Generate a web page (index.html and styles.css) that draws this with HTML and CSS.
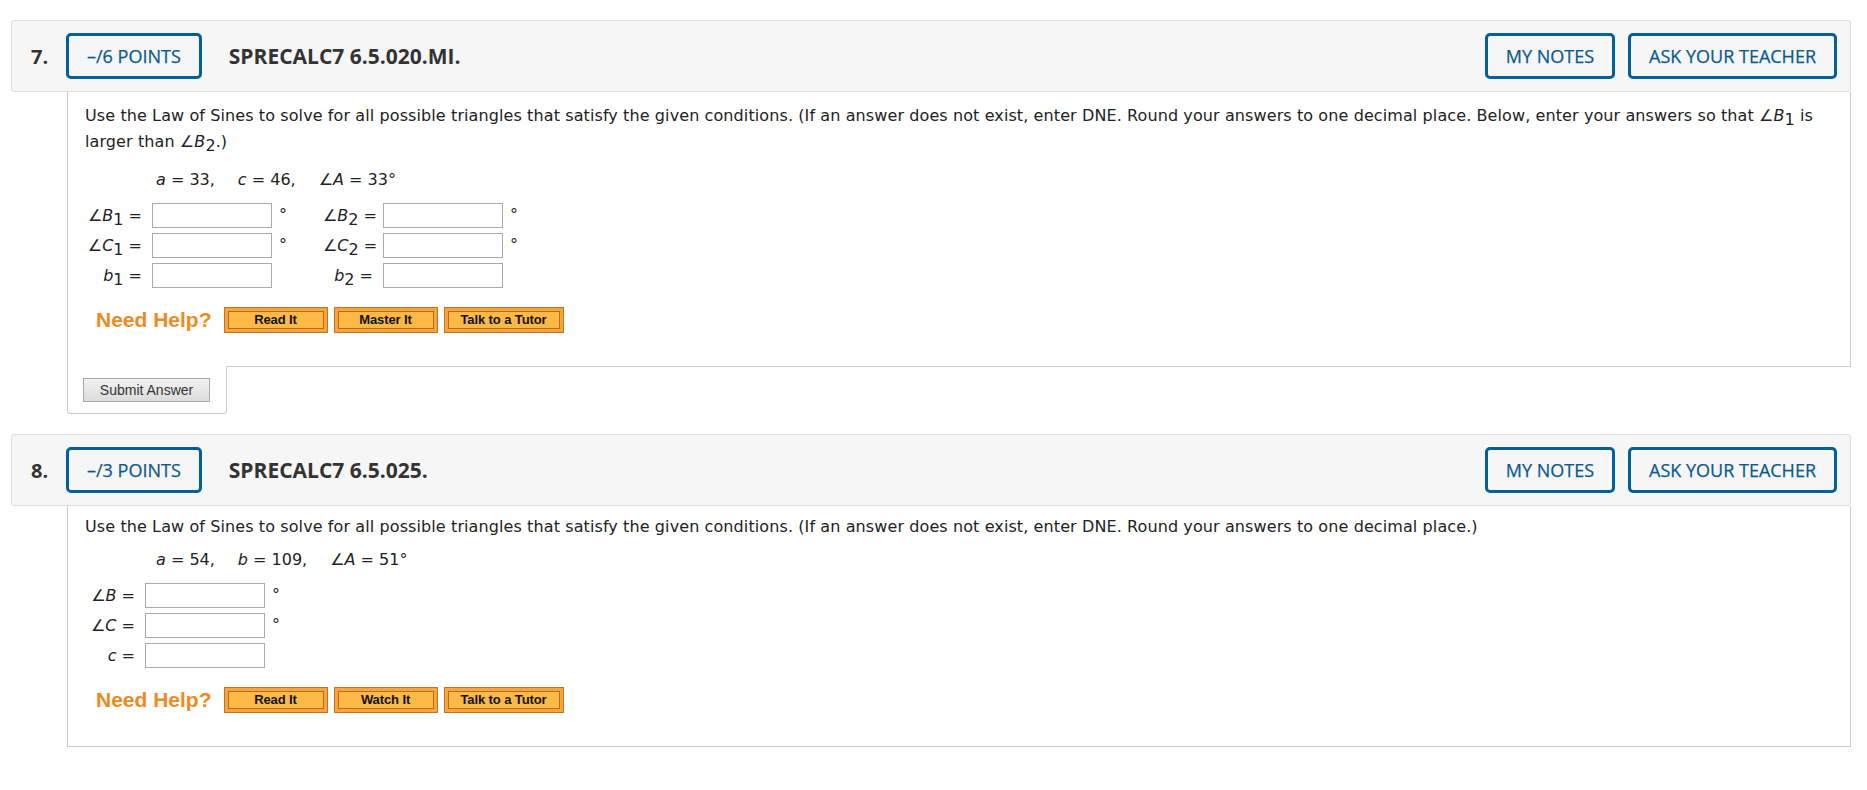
FILE: index.html
```html
<!DOCTYPE html>
<html>
<head>
<meta charset="utf-8">
<link rel="stylesheet" href="styles.css">
</head>
<body>
<div class="page">
  <section class="question">
    <header class="qhead">
      <span class="qnum">7.</span>
      <span class="hbtn">–/6 POINTS</span>
      <span class="qtitle">SPRECALC7 6.5.020.MI.</span>
      <span class="spacer"></span>
      <span class="hbtn">MY NOTES</span>
      <span class="hbtn teacher">ASK YOUR TEACHER</span>
    </header>
    <div class="qbody">
      <p class="prompt">Use the Law of Sines to solve for all possible triangles that satisfy the given conditions. (If an answer does not exist, enter DNE. Round your answers to one decimal place. Below, enter your answers so that <span class="m">∠<i>B</i><sub>1</sub></span> is larger than <span class="m">∠<i>B</i><sub>2</sub></span>.)</p>
      <p class="given"><span class="gi"><i>a</i> = 33,</span><span class="gi"><i>c</i> = 46,</span><span class="gi">∠<i>A</i> = 33°</span></p>
      <div class="answers two">
        <span class="lbl">∠<i>B</i><sub>1</sub> =</span><span class="box"></span><span class="deg">°</span>
        <span class="lbl">∠<i>B</i><sub>2</sub> =</span><span class="box"></span><span class="deg">°</span>
        <span class="lbl">∠<i>C</i><sub>1</sub> =</span><span class="box"></span><span class="deg">°</span>
        <span class="lbl">∠<i>C</i><sub>2</sub> =</span><span class="box"></span><span class="deg">°</span>
        <span class="lbl"><i>b</i><sub>1</sub> =</span><span class="box"></span><span class="deg"></span>
        <span class="lbl"><i>b</i><sub>2</sub> =</span><span class="box"></span><span class="deg"></span>
      </div>
      <div class="help">
        <span class="needhelp">Need Help?</span>
        <span class="hb"><span class="hbi">Read It</span></span>
        <span class="hb"><span class="hbi">Master It</span></span>
        <span class="hb wide"><span class="hbi">Talk to a Tutor</span></span>
      </div>
    </div>
    <div class="submit-tab"><span class="submit">Submit Answer</span></div>
  </section>

  <section class="question">
    <header class="qhead">
      <span class="qnum">8.</span>
      <span class="hbtn">–/3 POINTS</span>
      <span class="qtitle">SPRECALC7 6.5.025.</span>
      <span class="spacer"></span>
      <span class="hbtn">MY NOTES</span>
      <span class="hbtn teacher">ASK YOUR TEACHER</span>
    </header>
    <div class="qbody compact">
      <p class="prompt">Use the Law of Sines to solve for all possible triangles that satisfy the given conditions. (If an answer does not exist, enter DNE. Round your answers to one decimal place.)</p>
      <p class="given"><span class="gi"><i>a</i> = 54,</span><span class="gi"><i>b</i> = 109,</span><span class="gi">∠<i>A</i> = 51°</span></p>
      <div class="answers one">
        <span class="lbl">∠<i>B</i> =</span><span class="box"></span><span class="deg">°</span>
        <span class="lbl">∠<i>C</i> =</span><span class="box"></span><span class="deg">°</span>
        <span class="lbl"><i>c</i> =</span><span class="box"></span><span class="deg"></span>
      </div>
      <div class="help">
        <span class="needhelp">Need Help?</span>
        <span class="hb"><span class="hbi">Read It</span></span>
        <span class="hb"><span class="hbi">Watch It</span></span>
        <span class="hb wide"><span class="hbi">Talk to a Tutor</span></span>
      </div>
    </div>
  </section>
</div>
</body>
</html>
```

FILE: styles.css
```css
html, body {
  margin: 0;
  padding: 0;
  background: #ffffff;
}

.page {
  padding: 20px 0 0 11px;
  width: 1840px;
  font-family: "DejaVu Sans", Verdana, sans-serif;
  color: #222222;
}

.question {
  margin-bottom: 20px;
}

.qhead {
  display: flex;
  align-items: center;
  height: 70px;
  border: 1px solid #dddddd;
  border-radius: 3px;
  background: #f6f6f6;
  padding: 0 13px 0 19px;
  font-family: "Open Sans", sans-serif;
}

.qnum {
  font-weight: 700;
  font-size: 20px;
  color: #333333;
  width: 35px;
}

.hbtn {
  display: inline-flex;
  align-items: center;
  height: 40px;
  padding: 0 18px;
  border: 3px solid #00609c;
  border-radius: 5px;
  color: #0a5a8e;
  font-size: 18px;
  white-space: nowrap;
  -webkit-text-stroke: 0.25px #0a5a8e;
}

.hbtn.teacher {
  margin-left: 13px;
}

.qtitle {
  margin-left: 27px;
  font-weight: 700;
  font-size: 21px;
  color: #333333;
}

.spacer {
  flex: 1;
}

.qbody {
  margin-left: 56px;
  border: 1px solid #cccccc;
  border-top: none;
  padding: 11px 8px 33px 17px;
  font-size: 16px;
  line-height: 26px;
}

.qbody.compact {
  padding-top: 8px;
}

.prompt {
  margin: 0;
  letter-spacing: 0.1px;
}

.m sub, .lbl sub {
  font-size: 100%;
  vertical-align: -4px;
  line-height: 0;
}

.given {
  margin: 12px 0 0 71px;
}

.compact .given {
  margin-top: 7px;
}

.gi {
  margin-right: 23px;
}

.answers {
  display: grid;
  row-gap: 5px;
  margin-top: 10px;
  align-items: center;
}

.answers.two {
  grid-template-columns: 67px 120px 51px 60px 120px 20px;
}

.answers.one {
  grid-template-columns: 60px 120px 20px;
}

.lbl {
  text-align: right;
  padding-right: 10px;
  white-space: nowrap;
  line-height: 25px;
}

.box {
  display: block;
  height: 23px;
  border: 1px solid #aaaaaa;
  background: #ffffff;
}

.deg {
  padding-left: 7px;
  align-self: start;
  line-height: 24px;
}

.help {
  display: flex;
  align-items: center;
  margin: 19px 0 0 11px;
}

.needhelp {
  font-family: "Liberation Sans", Arial, sans-serif;
  font-weight: 700;
  font-size: 21px;
  color: #ef8a1e;
  margin-right: 12px;
  line-height: 26px;
}

.hb {
  display: inline-block;
  box-sizing: border-box;
  width: 104px;
  height: 26px;
  margin-right: 6px;
  padding: 3px;
  background: #f6a43b;
  border: 1px solid #c4731f;
}

.hb.wide {
  width: 120px;
}

.hbi {
  display: flex;
  align-items: center;
  justify-content: center;
  height: 16px;
  border: 1px solid #b66d1e;
  background: #fdb946;
  font-family: "Liberation Sans", Arial, sans-serif;
  font-weight: 700;
  font-size: 13px;
  color: #111111;
  letter-spacing: -0.1px;
}

.submit-tab {
  position: relative;
  margin: -1px 0 0 56px;
  width: 158px;
  height: 35px;
  padding-top: 12px;
  border: 1px solid #cccccc;
  border-top: none;
  border-radius: 0 0 4px 4px;
  background: #ffffff;
  box-sizing: content-box;
}

.submit {
  display: inline-block;
  margin-left: 15px;
  box-sizing: border-box;
  width: 127px;
  height: 24px;
  line-height: 22px;
  text-align: center;
  border: 1px solid #a9a9a9;
  background: linear-gradient(#f2f2f2, #dcdcdc);
  font-family: "Liberation Sans", Arial, sans-serif;
  font-size: 14px;
  color: #333333;
}
```
